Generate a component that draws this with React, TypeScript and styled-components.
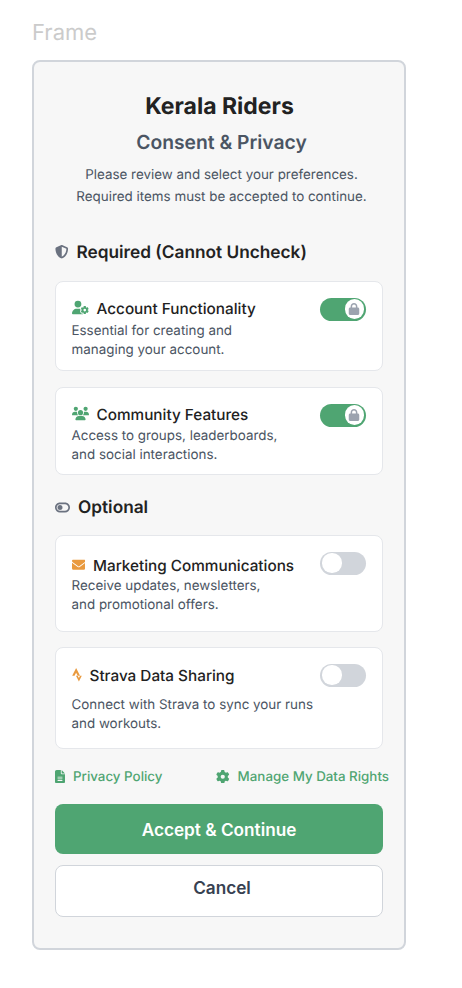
import React from 'react';
import type { ReactNode } from 'react';
import styled, { createGlobalStyle } from 'styled-components';
import {
  FaEnvelope,
  FaFileLines,
  FaGear,
  FaLock,
  FaShieldHalved,
  FaStrava,
  FaToggleOff,
  FaUserGear,
  FaUsers,
} from 'react-icons/fa6';

const GlobalStyle = createGlobalStyle`
  *, *::before, *::after { box-sizing: border-box; }
  body {
    margin: 0;
    background: #fff;
    font-family: Inter, sans-serif;
    -webkit-font-smoothing: antialiased;
    text-rendering: geometricPrecision;
  }
  h1, h2, h3, h4, p { margin: 0; }
  button { font-family: inherit; }
`;

const Page = styled.div`
  width: 462px;
  height: 988px;
  padding: 19px 0 0 32px;
`;

const FrameLabel = styled.div`
  height: 41px;
  font-size: 22px;
  line-height: 28px;
  color: #cbcbcb;
`;

const Panel = styled.main`
  display: flex;
  flex-direction: column;
  width: 374px;
  height: 890px;
  padding: 30px 21px 0;
  border: 2px solid #d1d5db;
  border-radius: 8px;
  background: #f7f7f7;
`;

const Header = styled.header`
  display: flex;
  flex-direction: column;
  align-items: center;
  width: 333px;
  height: 148px;
  text-align: center;
  white-space: nowrap;
`;

const Brand = styled.h1`
  margin-right: 4px;
  font-size: 23px;
  line-height: 28px;
  font-weight: 700;
  color: #222;
`;

const Subtitle = styled.h2`
  margin-top: 8px;
  font-size: 19.3px;
  line-height: 28px;
  font-weight: 600;
  color: #4b5563;
`;

const Intro = styled.p`
  margin-top: 8px;
  font-size: 13.4px;
  line-height: 22px;
  color: #4b5563;
`;

const SectionTitle = styled.h3`
  display: flex;
  align-items: center;
  gap: 8px;
  height: 26px;
  font-size: 17.25px;
  line-height: 26px;
  font-weight: 600;
  color: #222;

  svg { color: #6b7280; margin-top: -2px; }
`;

const CardList = styled.div<{ $top: number; $gap: number; $bottom: number }>`
  display: flex;
  flex-direction: column;
  gap: ${({ $gap }) => $gap}px;
  margin: ${({ $top, $bottom }) => `${$top}px 0 ${$bottom}px`};
`;

const Card = styled.section<{ $height: number }>`
  display: flex;
  justify-content: space-between;
  width: 328px;
  height: ${({ $height }) => $height}px;
  padding: 15px 15.5px 0;
  border: 1px solid #e5e7eb;
  border-radius: 8px;
  background: #fff;
`;

const CardText = styled.div<{ $offset: number }>`
  padding-top: ${({ $offset }) => $offset}px;
  white-space: nowrap;
`;

const CardTitle = styled.h4<{ $tone: string }>`
  display: flex;
  align-items: center;
  gap: 8px;
  height: 23px;
  font-size: 15.3px;
  line-height: 23px;
  font-weight: 500;
  color: #222;

  svg { color: ${({ $tone }) => $tone}; margin-top: -1.5px; }
`;

const Description = styled.p<{ $gap: number }>`
  margin-top: ${({ $gap }) => $gap}px;
  font-size: 13.4px;
  line-height: 19px;
  color: #4b5563;
`;

const Switch = styled.button<{ $on?: boolean }>`
  display: flex;
  align-items: center;
  justify-content: ${({ $on }) => ($on ? 'flex-end' : 'flex-start')};
  flex: none;
  width: 46px;
  height: 23px;
  margin: 0.5px 0.5px 0 0;
  padding: 0 2px;
  border: 0;
  border-radius: 12px;
  background: ${({ $on }) => ($on ? '#4fa572' : '#d1d5db')};
`;

const Knob = styled.span`
  display: flex;
  align-items: center;
  justify-content: center;
  width: 19.5px;
  height: 19.5px;
  border-radius: 50%;
  background: #fff;
  color: #9ca3af;
`;

const NarrowIcon = styled.span`
  display: flex;

  svg {
    width: 10px;
    height: 13.5px;
  }
`;

const Links = styled.nav`
  display: flex;
  justify-content: space-between;
  width: 334px;
  height: 20px;
`;

const TextLink = styled.a`
  display: flex;
  align-items: center;
  gap: 8px;
  font-size: 13.35px;
  line-height: 20px;
  font-weight: 500;
  color: #4fa572;
  white-space: nowrap;

  svg { margin-top: -1px; }
`;

const Actions = styled.div`
  display: flex;
  flex-direction: column;
  gap: 11px;
  margin-top: 17px;
`;

const ActionButton = styled.button<{ $primary?: boolean }>`
  width: 328px;
  height: ${({ $primary }) => ($primary ? 50 : 52)}px;
  padding: ${({ $primary }) => ($primary ? '0' : '0 0 7px 6px')};
  border: ${({ $primary }) => ($primary ? '0' : '1px solid #d1d5db')};
  border-radius: 8px;
  background: ${({ $primary }) => ($primary ? '#4fa572' : '#fff')};
  color: ${({ $primary }) => ($primary ? '#fff' : '#374151')};
  font-size: 17.2px;
  font-weight: 600;
`;

const GREEN = '#4fa572';
const ORANGE = '#e99a3f';

type PreferenceProps = {
  icon: ReactNode;
  tone: string;
  title: string;
  lines: [string, string];
  height: number;
  offset?: number;
  gap: number;
  locked?: boolean;
};

function Preference({ icon, tone, title, lines, height, offset = 0, gap, locked }: PreferenceProps) {
  return (
    <Card $height={height}>
      <CardText $offset={offset}>
        <CardTitle $tone={tone}>{icon}{title}</CardTitle>
        <Description $gap={gap}>{lines[0]}<br />{lines[1]}</Description>
      </CardText>
      <Switch $on={locked} role="switch" aria-checked={!!locked} aria-label={title}>
        <Knob>{locked && <FaLock size={12} />}</Knob>
      </Switch>
    </Card>
  );
}

export default function App() {
  return (
    <>
      <GlobalStyle />
      <Page>
        <FrameLabel>Frame</FrameLabel>
        <Panel>
          <Header>
            <Brand>Kerala Riders</Brand>
            <Subtitle>Consent &amp; Privacy</Subtitle>
            <Intro>
              Please review and select your preferences.<br />
              Required items must be accepted to continue.
            </Intro>
          </Header>

          <SectionTitle><FaShieldHalved size={13.5} />Required (Cannot Uncheck)</SectionTitle>
          <CardList $top={15} $gap={16} $bottom={20}>
            <Preference
              icon={<FaUserGear size={17} />} tone={GREEN} title="Account Functionality"
              lines={['Essential for creating and', 'managing your account.']}
              height={90} gap={2} locked
            />
            <Preference
              icon={<FaUsers size={17} />} tone={GREEN} title="Community Features"
              lines={['Access to groups, leaderboards,', 'and social interactions.']}
              height={88} gap={1} locked
            />
          </CardList>

          <SectionTitle><FaToggleOff size={15} />Optional</SectionTitle>
          <CardList $top={14} $gap={15} $bottom={18}>
            <Preference
              icon={<FaEnvelope size={13.5} />} tone={ORANGE} title="Marketing Communications"
              lines={['Receive updates, newsletters,', 'and promotional offers.']}
              height={97} offset={3} gap={0}
            />
            <Preference
              icon={<NarrowIcon><FaStrava /></NarrowIcon>} tone={ORANGE} title="Strava Data Sharing"
              lines={['Connect with Strava to sync your runs', 'and workouts.']}
              height={102} offset={1} gap={9}
            />
          </CardList>

          <Links>
            <TextLink><NarrowIcon><FaFileLines /></NarrowIcon>Privacy Policy</TextLink>
            <TextLink><FaGear size={13.5} />Manage My Data Rights</TextLink>
          </Links>
          <Actions>
            <ActionButton $primary>Accept &amp; Continue</ActionButton>
            <ActionButton>Cancel</ActionButton>
          </Actions>
        </Panel>
      </Page>
    </>
  );
}
